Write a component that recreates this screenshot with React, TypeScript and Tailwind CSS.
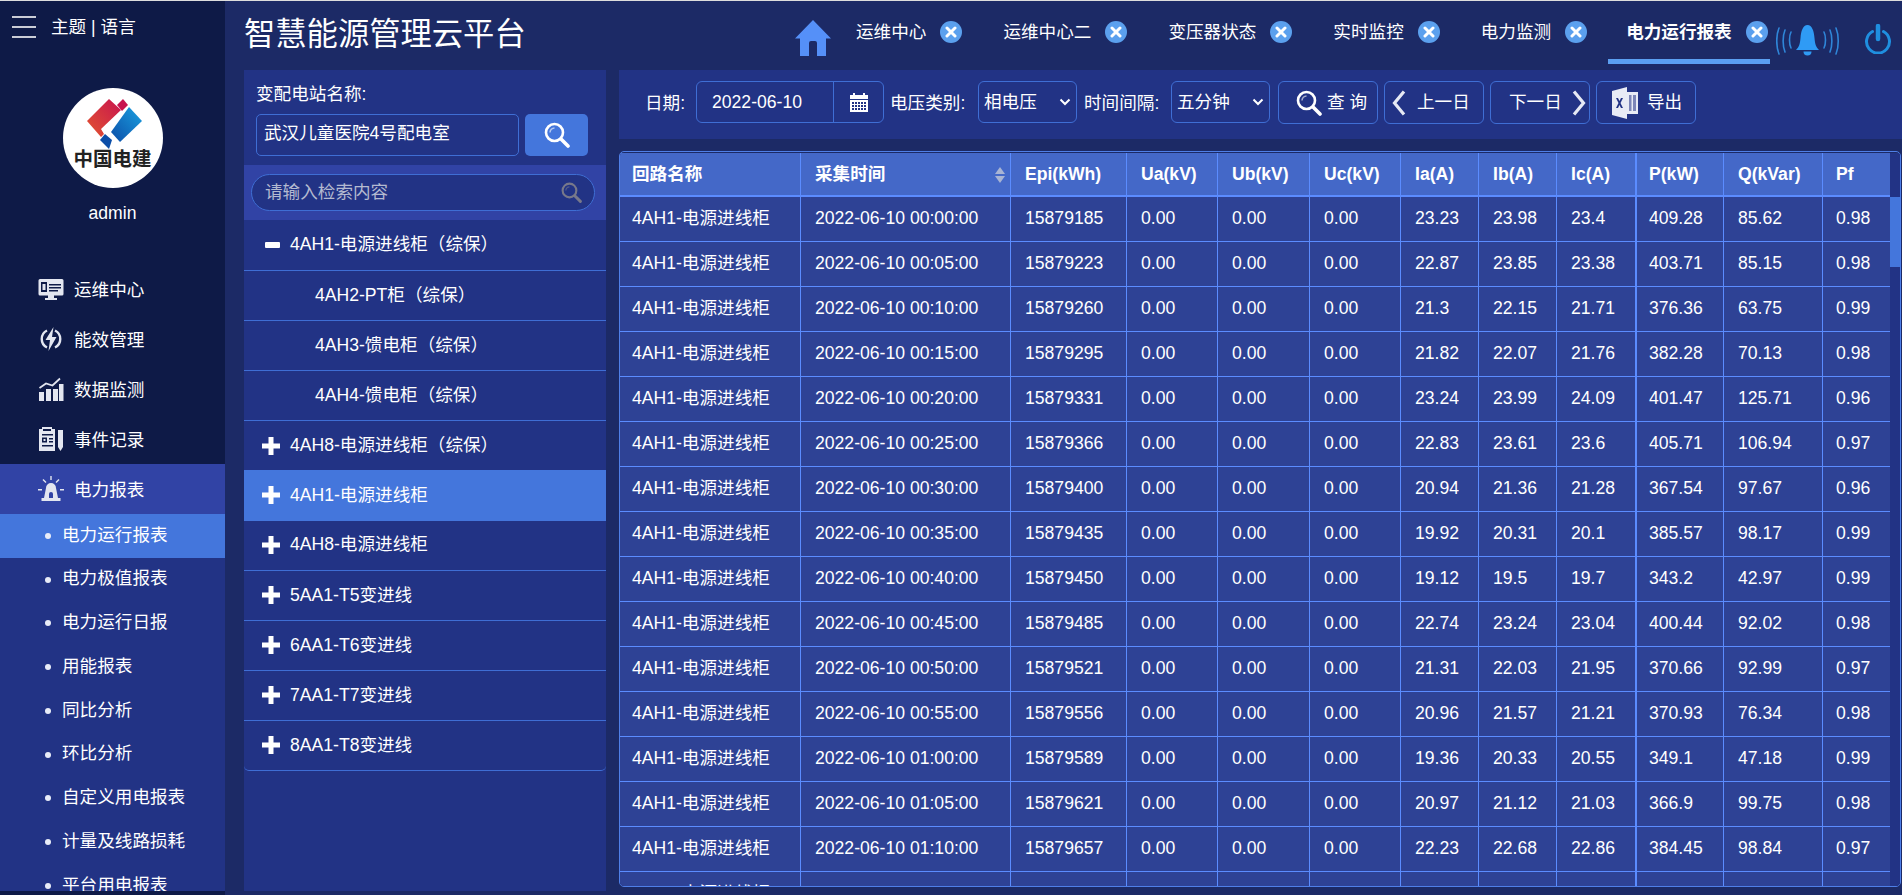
const font = 'font-["Liberation_Sans","Noto_Sans_CJK_SC",sans-serif]'

const rows = [
  ['00:00:00', '15879185', '23.23', '23.98', '23.4', '409.28', '85.62', '0.98'],
  ['00:05:00', '15879223', '22.87', '23.85', '23.38', '403.71', '85.15', '0.98'],
  ['00:10:00', '15879260', '21.3', '22.15', '21.71', '376.36', '63.75', '0.99'],
  ['00:15:00', '15879295', '21.82', '22.07', '21.76', '382.28', '70.13', '0.98'],
  ['00:20:00', '15879331', '23.24', '23.99', '24.09', '401.47', '125.71', '0.96'],
  ['00:25:00', '15879366', '22.83', '23.61', '23.6', '405.71', '106.94', '0.97'],
  ['00:30:00', '15879400', '20.94', '21.36', '21.28', '367.54', '97.67', '0.96'],
  ['00:35:00', '15879435', '19.92', '20.31', '20.1', '385.57', '98.17', '0.99'],
  ['00:40:00', '15879450', '19.12', '19.5', '19.7', '343.2', '42.97', '0.99'],
  ['00:45:00', '15879485', '22.74', '23.24', '23.04', '400.44', '92.02', '0.98'],
  ['00:50:00', '15879521', '21.31', '22.03', '21.95', '370.66', '92.99', '0.97'],
  ['00:55:00', '15879556', '20.96', '21.57', '21.21', '370.93', '76.34', '0.98'],
  ['01:00:00', '15879589', '19.36', '20.33', '20.55', '349.1', '47.18', '0.99'],
  ['01:05:00', '15879621', '20.97', '21.12', '21.03', '366.9', '99.75', '0.98'],
  ['01:10:00', '15879657', '22.23', '22.68', '22.86', '384.45', '98.84', '0.97'],
  ['01:15:00', '15879693', '19.44', '20.45', '20.17', '373.45', '94.94', '0.98'],
]

const columns = [
  { name: '回路名称', width: 'w-[181px]', pad: 'pl-[12px]' },
  { name: '采集时间', width: 'w-[210px]', pad: 'pl-[14px]' },
  { name: 'Epi(kWh)', width: 'w-[116px]', pad: 'pl-[14px]' },
  { name: 'Ua(kV)', width: 'w-[91px]', pad: 'pl-[14px]' },
  { name: 'Ub(kV)', width: 'w-[92px]', pad: 'pl-[14px]' },
  { name: 'Uc(kV)', width: 'w-[91px]', pad: 'pl-[14px]' },
  { name: 'Ia(A)', width: 'w-[78px]', pad: 'pl-[14px]' },
  { name: 'Ib(A)', width: 'w-[78px]', pad: 'pl-[14px]' },
  { name: 'Ic(A)', width: 'w-[79px]', pad: 'pl-[14px]' },
  { name: 'P(kW)', width: 'w-[88px]', pad: 'pl-[12px]' },
  { name: 'Q(kVar)', width: 'w-[99px]', pad: 'pl-[14px]' },
  { name: 'Pf', width: 'w-[67px]', pad: 'pl-[13px]' },
]

const reports = ['电力运行报表', '电力极值报表', '电力运行日报', '用能报表', '同比分析', '环比分析', '自定义用电报表', '计量及线路损耗', '平台用电报表']

const tabs = ['运维中心', '运维中心二', '变压器状态', '实时监控', '电力监测']

const tree = [
  { label: '4AH1-电源进线柜（综保）', mark: 'minus', box: 'h-[50px] pb-[2px] border-b border-[#3f6ed4]' },
  { label: '4AH2-PT柜（综保）', mark: 'none', box: 'h-[50px] border-b border-[#3f6ed4]' },
  { label: '4AH3-馈电柜（综保）', mark: 'none', box: 'h-[50px] border-b border-[#3f6ed4]' },
  { label: '4AH4-馈电柜（综保）', mark: 'none', box: 'h-[50px] border-b border-[#3f6ed4]' },
  { label: '4AH8-电源进线柜（综保）', mark: 'plus', box: 'h-[49px]' },
  { label: '4AH1-电源进线柜', mark: 'plus', box: 'h-[51px] pb-[1px] bg-[#4476dc]' },
  { label: '4AH8-电源进线柜', mark: 'plus', box: 'h-[50px] pb-[2px] border-b border-[#3f6ed4]' },
  { label: '5AA1-T5变进线', mark: 'plus', box: 'h-[50px] pb-[1px] border-b border-[#3f6ed4]' },
  { label: '6AA1-T6变进线', mark: 'plus', box: 'h-[50px] pb-[1px] border-b border-[#3f6ed4]' },
  { label: '7AA1-T7变进线', mark: 'plus', box: 'h-[50px] pb-[1px] border-b border-[#3f6ed4]' },
  { label: '8AA1-T8变进线', mark: 'plus', box: 'h-[50px] pb-[1px] border-b border-[#3f6ed4] rounded-b-[5px]' },
]

function MonitorIcon() {
  return (
    <svg viewBox="0 0 26 26" className="h-[26px] w-[26px]" fill="#e3e6f0">
      <path d="M2 3h22a1.500 1.500 0 0 1 1.500 1.500V18a1.500 1.500 0 0 1-1.500 1.500H2A1.500 1.500 0 0 1 .500 18V4.500A1.500 1.500 0 0 1 2 3z" />
      <rect x="10" y="19" width="6" height="3.500" />
      <rect x="7" y="22" width="12" height="2" />
      <rect x="3" y="6" width="6" height="10" fill="#0e1a47" />
      <rect x="4.500" y="8" width="3" height="6" />
      <path d="M11 8h12v1.500H11zM11 11h12v1.500H11zM11 14h9v1.500h-9z" fill="#0e1a47" />
    </svg>
  )
}

function BoltIcon() {
  return (
    <svg viewBox="0 0 26 26" className="h-[26px] w-[26px]" fill="none">
      <path d="M9 4.500a9.500 9.500 0 0 0 0 17M17 4.500a9.500 9.500 0 0 1 0 17" stroke="#e3e6f0" strokeWidth="2.400" />
      <path d="M15.500 1 7.500 14h4.500l-1.500 11 8-14h-4.500z" fill="#e3e6f0" />
    </svg>
  )
}

function BarsIcon() {
  return (
    <svg viewBox="0 0 26 26" className="h-[26px] w-[26px]" fill="#e3e6f0">
      <rect x="1" y="16" width="5" height="9" />
      <rect x="8" y="13" width="5" height="12" />
      <rect x="15" y="13" width="5" height="12" />
      <rect x="21" y="8" width="4.500" height="17" />
      <path d="m1.500 12 6.500-4.500 6.500 2 7.500-7" stroke="#e3e6f0" strokeWidth="1.800" fill="none" />
    </svg>
  )
}

function RecordIcon() {
  return (
    <svg viewBox="0 0 26 26" className="h-[26px] w-[26px]" fill="#e3e6f0">
      <path d="M1 3h3V1h10v2h3v22H1z" />
      <path d="M5 3h8v2H5z" fill="#0e1a47" />
      <path d="M4 8h11v1.500H4zM4 19h11v1.500H4z" fill="#0e1a47" />
      <path d="M4 11.500h5v5H4zM11 12h4v1.500h-4zM11 15h4v1.500h-4z" fill="#0e1a47" />
      <path d="M5.500 13h2v2h-2z" />
      <path d="M20 4h5v17l-2.500 4-2.500-4z" />
    </svg>
  )
}

function AlarmIcon() {
  return (
    <svg viewBox="0 0 26 26" className="h-[26px] w-[26px]" fill="#e3e6f0">
      <path d="M3.500 25v-3h2.500l2-10a5 5 0 0 1 10 0l2 10h2.500v3z" />
      <path d="M11 22v-4a2 2 0 0 1 4 0v4z" fill="#3143a5" />
      <path d="M12.300 0h1.400v4h-1.400zM4.500 4l1-1 3 3-1 1zM21.500 4l-1-1-3 3 1 1zM0 13h4v1.500H0zM22 13h4v1.500h-4z" />
    </svg>
  )
}

function MagnifierIcon({ className = 'h-[26px] w-[26px]', color = '#ffffff' }: { className?: string; color?: string }) {
  return (
    <svg viewBox="0 0 26 26" className={className} fill="none">
      <circle cx="10.500" cy="10.500" r="8.500" stroke={color} strokeWidth="2.600" />
      <path d="M6 10.500a4.500 4.500 0 0 1 4.500-4.500" stroke={color} strokeWidth="1.500" opacity="0.6" />
      <path d="m17 17 7 7" stroke={color} strokeWidth="3.600" strokeLinecap="round" />
    </svg>
  )
}

function CloseDot() {
  return (
    <span className="flex h-[22px] w-[22px] shrink-0 items-center justify-center rounded-full bg-[#5ba0ee]">
      <svg viewBox="0 0 12 12" className="h-[12px] w-[12px]">
        <path d="m2 2 8 8M10 2l-8 8" stroke="#ffffff" strokeWidth="3" strokeLinecap="round" />
      </svg>
    </span>
  )
}

function Logo() {
  return (
    <div className="relative mx-auto h-[100px] w-[100px] overflow-hidden rounded-full bg-white">
      <svg viewBox="0 0 100 70" className="absolute left-0 top-0 h-[70px] w-[100px]">
        <defs>
          <linearGradient id="logoRed" x1="0" y1="1" x2="1" y2="0">
            <stop offset="0" stopColor="#e2542f" />
            <stop offset="1" stopColor="#c8144f" />
          </linearGradient>
          <linearGradient id="logoBlue" x1="0" y1="1" x2="1" y2="0">
            <stop offset="0" stopColor="#0c4ea8" />
            <stop offset="1" stopColor="#1aa0e0" />
          </linearGradient>
        </defs>
        <path d="M24 33 46 11l12 11-20 19 3 5-3 3z" fill="url(#logoRed)" />
        <path d="m54 17 6-6 5 6-6 6z" fill="#c8144f" />
        <path d="m66 19 13 14-22 21-9-10z" fill="url(#logoBlue)" />
        <path d="m42 46 7 6-3 9-9-9z" fill="#0c4ea8" />
      </svg>
      <div className={`absolute inset-x-0 top-[59px] text-center text-[19.500px] font-bold leading-[24px] text-[#222222] ${font}`}>中国电建</div>
    </div>
  )
}

function Sidebar() {
  const items = [
    { label: '运维中心', icon: <MonitorIcon /> },
    { label: '能效管理', icon: <BoltIcon /> },
    { label: '数据监测', icon: <BarsIcon /> },
    { label: '事件记录', icon: <RecordIcon /> },
  ]
  return (
    <aside className="flex h-full w-[225px] shrink-0 flex-col overflow-hidden bg-[#0e1a47] pb-[4px]">
      <div className="flex h-[87px] shrink-0 items-start gap-[15px] pl-[12px] pt-[15px]">
        <div className="flex h-[22px] w-[24px] flex-col justify-between">
          <span className="h-[2px] bg-[#c9ccd6]" />
          <span className="h-[2px] bg-[#c9ccd6]" />
          <span className="h-[2px] bg-[#c9ccd6]" />
        </div>
        <span className="text-[17.600px] leading-[22px]">主题 | 语言</span>
      </div>
      <Logo />
      <div className="flex h-[50px] shrink-0 items-center justify-center text-[17.600px]">admin</div>
      <nav className="mt-[26px] min-h-0 flex-1 overflow-hidden">
        {items.map((item) => (
          <div key={item.label} className="flex h-[50px] items-center gap-[10px] pl-[38px] text-[17.600px]">
            {item.icon}
            <span className="pt-[2px]">{item.label}</span>
          </div>
        ))}
        <div className="flex h-[50px] items-center gap-[10px] bg-[#3143a5] pl-[38px] text-[17.600px]">
          <AlarmIcon />
          <span className="pt-[2px]">电力报表</span>
        </div>
        <ul className="h-full bg-[#223385]">
          {reports.map((name, i) => (
            <li key={name} className={`flex h-[43.750px] items-center gap-[11px] pl-[45px] text-[17.600px] ${i === 0 ? 'bg-[#4476dc]' : ''}`}>
              <span className="h-[6px] w-[6px] rounded-full bg-[#e8ecf8]" />
              <span className="pb-[2px]">{name}</span>
            </li>
          ))}
        </ul>
      </nav>
    </aside>
  )
}

function TopBar() {
  return (
    <header className="flex h-[69px] shrink-0 items-start">
      <h1 className="ml-[19px] w-[551px] shrink-0 pt-[16px] text-[31.300px] font-normal leading-[36px]">智慧能源管理云平台</h1>
      <svg viewBox="0 0 36 38" className="mt-[19px] h-[38px] w-[36px] shrink-0" fill="#5590f8">
        <path d="M18 0 36 18.500H31V36H22V23a2 2 0 0 0-2-2h-4a2 2 0 0 0-2 2V36H5V18.500H0z" />
      </svg>
      <div className="ml-[4px] flex">
        {tabs.map((tab) => (
          <div key={tab} className="flex h-[63px] items-center gap-[14px] border-b-[5px] border-transparent pl-[21px] pr-[20px] pt-[4px] text-[17.600px]">
            <span>{tab}</span>
            <CloseDot />
          </div>
        ))}
        <div className="ml-[1px] flex h-[63px] items-center gap-[14px] border-b-[5px] border-[#5b9ff0] pl-[18px] pr-[2px] pt-[4px] text-[17.600px] font-bold">
          <span>电力运行报表</span>
          <CloseDot />
        </div>
      </div>
      <svg viewBox="0 0 64 33" className="ml-[6px] mt-[23px] h-[33px] w-[64px] shrink-0" fill="none">
        <path d="M20 26h23c-3-3-4-6-4.500-12C38 7 36 1 31.500 1S25 7 24.500 14C24 20 23 23 20 26z" fill="#2f9bf5" />
        <path d="M27.500 27.500h8a4 4 0 0 1-8 0z" fill="#2f9bf5" />
        <path d="M15 8c-2 4-2 12 0 16M9 6c-2.500 6-2.500 16 0 22M3 4c-3 7-3 19 0 26M48 8c2 4 2 12 0 16M54 6c2.500 6 2.500 16 0 22M60 4c3 7 3 19 0 26" stroke="#2f86d8" strokeWidth="1.600" strokeLinecap="round" />
      </svg>
      <svg viewBox="0 0 28 30" className="ml-[24px] mt-[23px] h-[30px] w-[28px] shrink-0" fill="none">
        <path d="M8.500 7.500a11.500 11.500 0 1 0 11 0" stroke="#1f8fe0" strokeWidth="3" strokeLinecap="round" />
        <path d="M14 2v13" stroke="#1f8fe0" strokeWidth="4.500" strokeLinecap="round" />
      </svg>
    </header>
  )
}

function TreePanel() {
  return (
    <section className="flex h-full w-[362px] shrink-0 flex-col bg-[#223385]">
      <div className="h-[95px] shrink-0 px-[12px] pt-[13px]">
        <div className="h-[31px] text-[17.600px] leading-[22px]">变配电站名称:</div>
        <div className="flex gap-[6px]">
          <div className="flex h-[42px] w-[263px] items-center rounded-[5px] border border-[#3f6ed4] pb-[3px] pl-[7px] text-[17.600px]">武汉儿童医院4号配电室</div>
          <div className="flex h-[42px] w-[63px] items-center justify-center rounded-[5px] bg-[#4476dc]">
            <MagnifierIcon />
          </div>
        </div>
      </div>
      <div className="flex h-[55px] shrink-0 items-center bg-[#3143a5] px-[7px]">
        <div className="flex h-[37px] w-[344px] items-center justify-between rounded-full border border-[#3f6ed4] bg-[#223385] pb-[1px] pl-[13px] pr-[12px] text-[17.600px] text-[#b4bad0]">
          <span>请输入检索内容</span>
          <MagnifierIcon className="h-[21px] w-[21px]" color="#77788a" />
        </div>
      </div>
      <ul className="mt-[1px] rounded-b-[5px]">
        {tree.map((node) => (
          <li key={node.label} className={`flex items-center text-[17.600px] ${node.box} ${node.mark === 'none' ? 'pl-[71px]' : 'pl-[18px]'}`}>
            {node.mark === 'plus' && (
              <svg viewBox="0 0 18 18" className="mr-[10px] h-[18px] w-[18px] shrink-0" fill="#ffffff">
                <path d="M6.500 0h5v6.500H18v5h-6.500V18h-5v-6.500H0v-5h6.500z" />
              </svg>
            )}
            {node.mark === 'minus' && (
              <span className="ml-[3px] mr-[10px] h-[6px] w-[15px] shrink-0 rounded-[1px] bg-white" />
            )}
            <span>{node.label}</span>
          </li>
        ))}
      </ul>
    </section>
  )
}

function ToolButton({ children, className = '' }: { children: React.ReactNode; className?: string }) {
  return (
    <div className={`flex h-[43px] shrink-0 items-center whitespace-nowrap rounded-[6px] border border-[#3f6ed4] text-[17.600px] ${className}`}>{children}</div>
  )
}

function ExcelIcon() {
  return (
    <svg viewBox="0 0 26 32" className="h-[32px] w-[26px] shrink-0" fill="#e8ebf5">
      <path d="M0 4 15 0v32L0 28z" />
      <path d="M15 5h11v22H15z" />
      <path d="M4 11h2l1.500 3 1.500-3h2l-2.500 5 2.500 5H9l-1.500-3L6 21H4l2.500-5z" fill="#223385" />
      <path d="M17 8h2.500v16H17zM21 8h3v16h-3z" fill="#223385" opacity="0.55" />
    </svg>
  )
}

function SelectChevron() {
  return (
    <svg viewBox="0 0 12 8" className="h-[8px] w-[12px] shrink-0" fill="none">
      <path d="m1.500 1.500 4.500 4.500 4.500-4.500" stroke="#ffffff" strokeWidth="2" />
    </svg>
  )
}

function ArrowIcon({ flip = false }: { flip?: boolean }) {
  return (
    <svg viewBox="0 0 14 26" className={`h-[26px] w-[14px] shrink-0 ${flip ? 'rotate-180' : ''}`} fill="none">
      <path d="M12 1.500 2.500 13 12 24.500" stroke="#e6e9f4" strokeWidth="3.200" />
    </svg>
  )
}

function Toolbar() {
  return (
    <div className="flex h-[69px] shrink-0 items-start bg-[#223385] pl-[26px] pt-[11px] text-[17.600px]">
      <span className="h-[42px] w-[51px] shrink-0 leading-[44px]">日期:</span>
      <div className="flex h-[42px] w-[188px] shrink-0 rounded-[6px] border border-[#3f6ed4]">
        <span className="w-[137px] border-r border-[#3f6ed4] pl-[15px] leading-[40px]">2022-06-10</span>
        <div className="flex flex-1 items-center justify-center">
          <svg viewBox="0 0 18 20" className="h-[20px] w-[18px]" fill="#ffffff">
            <path d="M0 3h3V1h2v2h8V1h2v2h3v4H0z" />
            <path d="M0 8h18v12H0z" />
            <path d="M2 10h2v2H2zM5 10h2v2H5zM8 10h2v2H8zM11 10h2v2h-2zM14 10h2v2h-2zM2 13h2v2H2zM5 13h2v2H5zM8 13h2v2H8zM11 13h2v2h-2zM14 13h2v2h-2zM2 16h2v2H2zM5 16h2v2H5zM8 16h2v2H8zM11 16h2v2h-2zM14 16h2v2h-2z" fill="#223385" />
          </svg>
        </div>
      </div>
      <span className="ml-[6px] h-[42px] w-[88px] shrink-0 leading-[44px]">电压类别:</span>
      <div className="flex h-[42px] w-[99px] shrink-0 items-center justify-between rounded-[6px] border border-[#3f6ed4] pl-[5px] pr-[5px]">
        <span>相电压</span>
        <SelectChevron />
      </div>
      <span className="ml-[7px] h-[42px] w-[87px] shrink-0 leading-[44px]">时间间隔:</span>
      <div className="flex h-[42px] w-[99px] shrink-0 items-center justify-between rounded-[6px] border border-[#3f6ed4] pl-[5px] pr-[5px]">
        <span>五分钟</span>
        <SelectChevron />
      </div>
      <ToolButton className="ml-[8px] w-[100px] pl-[17px]">
        <MagnifierIcon />
        <span className="ml-[5px] whitespace-pre">查 询</span>
      </ToolButton>
      <ToolButton className="ml-[6px] w-[100px] pl-[7px]">
        <ArrowIcon />
        <span className="ml-[11px]">上一日</span>
      </ToolButton>
      <ToolButton className="ml-[6px] w-[100px] pl-[18px]">
        <span>下一日</span>
        <span className="ml-[10px] flex">
          <ArrowIcon flip />
        </span>
      </ToolButton>
      <ToolButton className="ml-[6px] w-[100px] pl-[15px]">
        <ExcelIcon />
        <span className="ml-[9px]">导出</span>
      </ToolButton>
    </div>
  )
}

function DataTable() {
  return (
    <div className="flex h-[736px] w-[1282px] shrink-0 overflow-hidden rounded-[5px] border border-[#4f7fe8] pt-[1px]">
      <table className="w-[1270px] shrink-0 table-fixed border-separate border-spacing-0">
        <colgroup>
          {columns.map((col) => (
            <col key={col.name} className={col.width} />
          ))}
        </colgroup>
        <thead>
          <tr>
            {columns.map((col, i) => (
              <th
                key={col.name}
                className={`relative h-[44px] border-b-2 border-b-[#5b8cff] bg-[#4468c8] text-left text-[17.600px] font-bold ${col.pad} ${i < 11 ? 'border-r border-r-[#5b8cff]' : ''} ${i === 9 ? 'border-l border-l-[#5b8cff]' : ''}`}
              >
                {col.name}
                {i === 1 && (
                  <span className="absolute right-[5px] top-[14px] flex flex-col gap-[2px]">
                    <span className="h-0 w-0 border-x-[5px] border-b-[7px] border-x-transparent border-b-[#a9b4d4]" />
                    <span className="h-0 w-0 border-x-[5px] border-t-[7px] border-x-transparent border-t-[#a9b4d4]" />
                  </span>
                )}
              </th>
            ))}
          </tr>
        </thead>
        <tbody>
          {rows.map((row) => {
            const cells = ['4AH1-电源进线柜', `2022-06-10 ${row[0]}`, row[1], '0.00', '0.00', '0.00', ...row.slice(2)]
            return (
              <tr key={row[0]}>
                {cells.map((cell, i) => (
                  <td
                    key={i}
                    className={`h-[45px] border-b border-b-[#5b8cff] bg-[#2e4295] pb-[2px] text-[17.600px] ${columns[i].pad} ${i < 11 ? 'border-r border-r-[#5b8cff]' : ''} ${i === 9 ? 'border-l border-l-[#5b8cff]' : ''}`}
                  >
                    {cell}
                  </td>
                ))}
              </tr>
            )
          })}
        </tbody>
      </table>
      <div className="min-w-0 flex-1 bg-[#223385] pt-[44px]">
        <div className="h-[70px] bg-[#4476dc]" />
      </div>
    </div>
  )
}

export default function App() {
  return (
    <div className={`flex h-screen w-full flex-col overflow-hidden bg-[#1c2a66] text-white ${font}`}>
      <div className="h-px shrink-0 bg-[#dddddd]" />
      <div className="flex min-h-0 flex-1">
        <Sidebar />
        <main className="flex min-w-0 flex-1 flex-col">
          <TopBar />
          <div className="flex min-h-0 flex-1 pb-[4px] pl-[19px]">
            <TreePanel />
            <div className="ml-[13px] flex min-w-0 flex-1 flex-col overflow-hidden">
              <Toolbar />
              <div className="mt-[12px]">
                <DataTable />
              </div>
            </div>
          </div>
        </main>
      </div>
    </div>
  )
}
